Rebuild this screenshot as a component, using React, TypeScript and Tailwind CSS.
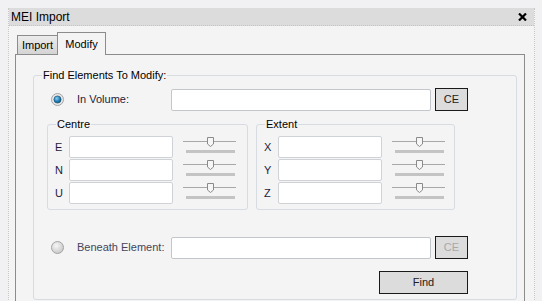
import React from 'react'

const font = { fontFamily: '"Liberation Sans", Arial, sans-serif' }

function Radio({ checked }: { checked?: boolean }) {
  return (
    <svg width="13" height="13" viewBox="0 0 13 13" className="shrink-0">
      <defs>
        <radialGradient id="rg-off" cx="40%" cy="35%" r="70%">
          <stop offset="0%" stopColor="#f6f6f6" />
          <stop offset="100%" stopColor="#c6c6c6" />
        </radialGradient>
        <radialGradient id="rg-on" cx="40%" cy="35%" r="70%">
          <stop offset="0%" stopColor="#8fd0f2" />
          <stop offset="60%" stopColor="#1f7fb8" />
          <stop offset="100%" stopColor="#0d4e7a" />
        </radialGradient>
      </defs>
      <circle cx="6.5" cy="6.5" r="6" fill={checked ? '#e8e8e8' : 'url(#rg-off)'} stroke="#a4a4a4" strokeWidth="1" />
      {checked && <circle cx="6.5" cy="6.5" r="3.6" fill="url(#rg-on)" stroke="#1a4f73" strokeWidth="0.6" />}
    </svg>
  )
}

function Slider() {
  return (
    <div className="relative w-[53px] h-[22px] shrink-0">
      <div className="absolute left-0 right-0 top-[5px] h-[2px] border-t border-[#a8a8a8] border-b-white" />
      <svg width="7" height="10" viewBox="0 0 7 10" className="absolute left-[24px] top-[1px]">
        <path d="M0.5 0.5 H6.5 V7 L3.5 9.5 L0.5 7 Z" fill="#f6f6f6" stroke="#8a8a8a" />
      </svg>
      <div className="absolute left-[3px] right-[1px] top-[14px] h-[3px] bg-[#c4c4c4]" />
    </div>
  )
}

function AxisRow({ label }: { label: string }) {
  return (
    <div className="flex items-center h-[22px]">
      <span className="w-[14px] text-[11px] text-[#1c1c3c]">{label}</span>
      <div className="w-[104px] h-[22px] bg-white border border-[#cfd3d8] rounded-[2px]" />
      <div className="ml-[10px]">
        <Slider />
      </div>
    </div>
  )
}

function SubGroup({ title, labels, width }: { title: string; labels: string[]; width: string }) {
  return (
    <fieldset className={`${width} border border-[#d6dce2] rounded-[3px] pl-[7px] pb-[5px]`}>
      <legend className="ml-[1px] px-[1px] text-[11px] leading-[13px] text-black">{title}</legend>
      <div className="flex flex-col gap-[1px] pt-[5px]">
        {labels.map((l) => (
          <AxisRow key={l} label={l} />
        ))}
      </div>
    </fieldset>
  )
}

export default function App() {
  return (
    <div className="w-[542px] h-[301px] overflow-hidden bg-[#f1f1f3] pt-[8px] pl-[8px]" style={font}>
      <div className="w-[527px] bg-[#f4f4f4] border-x border-dotted border-[#c8c8c8]">
        <div className="h-[18px] bg-[#dcdcdc] border-b border-dotted border-[#c4c4c4] flex items-center justify-between pl-[2px] pr-[7px]">
          <span className="text-[12px] text-black leading-none">MEI Import</span>
          <svg width="9" height="8" viewBox="0 0 9 8">
            <path d="M1 0.5 L8 7.5 M8 0.5 L1 7.5" stroke="#000" strokeWidth="2.2" />
          </svg>
        </div>
        <div className="pl-[6px] pr-[9px] pt-[6px]">
          <div className="flex items-end pl-[2px] h-[22px]">
            <div className="w-[41px] h-[19px] border border-b-0 border-[#8c8c8c] bg-gradient-to-b from-[#ececec] to-[#d4d4d4] flex items-center justify-center text-[11px] text-black">
              Import
            </div>
            <div className="relative z-10 -ml-px -mb-px w-[49px] h-[23px] border border-b-0 border-[#8c8c8c] bg-[#f4f4f4] flex items-start justify-center pt-[3px] text-[11px] text-black">
              Modify
            </div>
          </div>
          <div className="border border-[#8c8c8c] border-b-0 pt-[14px] pl-[17px] pr-[7px] pb-[20px]">
            <fieldset className="border border-[#d6dce2] rounded-[3px] pb-[5px]">
              <legend className="ml-[8px] px-[1px] text-[11px] leading-[13px] text-black">Find Elements To Modify:</legend>
              <div className="flex items-center pt-[6px] pl-[17px]">
                <Radio checked />
                <span className="ml-[13px] w-[94px] text-[11px] text-[#1c1c3c]">In Volume:</span>
                <div className="w-[260px] h-[22px] bg-white border border-[#c3c6ca] rounded-[2px]" />
                <button className="ml-[4px] w-[33px] h-[23px] bg-[#dcdcdc] border border-[#1a1a1a] text-[11px] text-[#202020]">CE</button>
              </div>
              <div className="flex gap-[8px] pl-[13px] pt-[7px]">
                <SubGroup title="Centre" labels={['E', 'N', 'U']} width="w-[201px]" />
                <SubGroup title="Extent" labels={['X', 'Y', 'Z']} width="w-[199px]" />
              </div>
              <div className="flex items-center pt-[26px] pl-[17px]">
                <Radio />
                <span className="ml-[13px] w-[94px] text-[11px] text-[#44445a]">Beneath Element:</span>
                <div className="w-[260px] h-[22px] bg-white border border-[#c3c6ca] rounded-[2px]" />
                <button className="ml-[4px] w-[33px] h-[23px] bg-[#dcdcdc] border border-[#1a1a1a] text-[11px] text-[#a8a8a8]">CE</button>
              </div>
              <div className="flex justify-end pt-[12px] pr-[48px]">
                <button className="w-[89px] h-[23px] bg-[#dcdcdc] border border-[#1a1a1a] text-[11px] text-[#202020]">Find</button>
              </div>
            </fieldset>
          </div>
        </div>
      </div>
    </div>
  )
}
